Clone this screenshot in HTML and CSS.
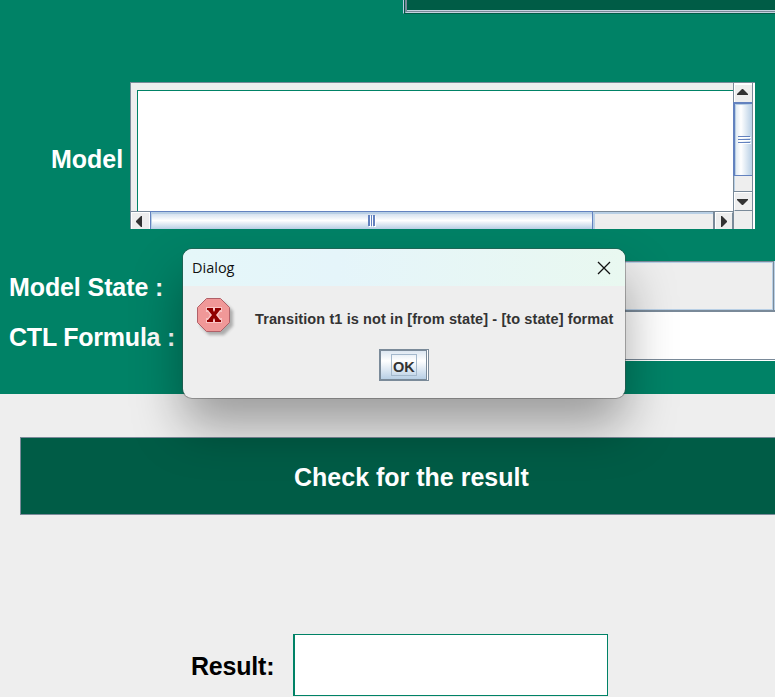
FILE: index.html
```html
<!DOCTYPE html>
<html lang="en">
<head>
<meta charset="utf-8">
<title>Model checker</title>
<link rel="stylesheet" href="styles.css">
</head>
<body>
<main class="inputs">
  <div class="top-button"><div class="top-button-face"></div></div>
  <section class="model-row">
    <label class="label model-label"><span>Model</span></label>
    <div class="scroll-pane">
      <div class="viewport"><div class="textarea"></div></div>
      <div class="vbar">
        <div class="v-btn up"><svg width="11" height="6" viewBox="0 0 11 6"><path d="M5 0h1l5 5v1H0V5z"/></svg></div>
        <div class="v-thumb"><i></i><i></i><i></i></div>
        <div class="v-track"></div>
        <div class="v-btn down"><svg width="11" height="6" viewBox="0 0 11 6"><path d="M0 0h11v1L6 6H5L0 1z"/></svg></div>
      </div>
      <div class="hbar">
        <div class="h-btn left"><svg width="6" height="11" viewBox="0 0 6 11"><path d="M6 0v11H5L0 6V5l5-5z"/></svg></div>
        <div class="h-thumb"><i></i><i></i><i></i></div>
        <div class="h-track"></div>
        <div class="h-btn right"><svg width="6" height="11" viewBox="0 0 6 11"><path d="M0 0v11h1l5-5V5L1 0z"/></svg></div>
      </div>
      <div class="corner"></div>
    </div>
  </section>
  <section class="form-row">
    <label class="label"><span class="t-state">Model State :</span></label>
    <div class="combo"><div class="combo-value"></div><div class="combo-arrow"></div></div>
  </section>
  <section class="form-row formula">
    <label class="label"><span class="t-formula">CTL Formula :</span></label>
    <div class="field"></div>
  </section>
</main>
<div class="check-button"><span class="t-check">Check for the result</span></div>
<section class="result-row">
  <label class="label result-label"><span class="t-result">Result:</span></label>
  <div class="result-field"></div>
</section>

<div class="dialog">
  <header class="titlebar">
    <span class="title">Dialog</span>
    <svg class="close" width="14" height="14" viewBox="0 0 14 14"><path d="M1 1l12 12M13 1L1 13"/></svg>
  </header>
  <div class="message">
    <svg class="error-icon" width="40" height="42" viewBox="0 0 40 42">
      <path class="icon-shadow" d="M13 5h15l9 9v15l-9 9H13l-9-9V14z"/>
      <path class="octagon" d="M10.500 1.500h14l9 9v15l-9 9h-14l-9-9v-15z"/>
      <path class="x-halo" d="M10 10h16v5h-2l-2 3 2 3h2v5H10v-5h2l2-3-2-3h-2z"/>
      <path class="x-mark" d="M12 11h5v2l1 2 1-2v-2h6v2h-1l-4 5 4 5h1v2h-6v-2l-1-2-1 2v2h-6v-2h1l4-5-4-5h-1v-2z"/>
    </svg>
    <span class="message-text">Transition t1 is not in [from state] - [to state] format</span>
  </div>
  <div class="actions"><div class="ok"><div class="ok-face"><span class="ok-focus">OK</span></div></div></div>
</div>
</body>
</html>
```
FILE: styles.css
```css
* { box-sizing: border-box; }
body {
  margin: 0;
  width: 775px;
  height: 697px;
  overflow: hidden;
  position: relative;
  background: #eeeeee;
  font-family: "Liberation Sans", Arial, sans-serif;
  font-weight: bold;
}
svg { display: block; }

.inputs { height: 394px; background: #008266; overflow: hidden; }
.label { font-size: 25px; line-height: 30px; color: #fff; white-space: nowrap; }
.t-state { letter-spacing: -.1px; }
.t-formula { letter-spacing: -.22px; }
.t-result { letter-spacing: -.2px; }

.top-button {
  height: 14px;
  margin-left: 403px;
  border-left: 1px solid #b8cfe5;
  border-bottom: 1px solid #005c46;
  background: #005c46;
  padding: 0 0 0 1px;
}
.top-button-face {
  height: 13px;
  background: #005c46;
  border-left: 1px solid #7a8a99;
  border-bottom: 1px solid #c4d3e0;
  box-shadow: inset 1px -1px #7a8a99, inset 1px -2px #c4d3e0, inset 1px 0 #c4d3e0;
}

.model-row { display: flex; margin-top: 68px; height: 147px; }
.model-label { width: 130px; padding: 62px 0 0 51px; }
.scroll-pane {
  width: 625px;
  height: 147px;
  display: grid;
  grid-template-columns: 602px 20px;
  grid-template-rows: 128px 18px;
  background: #eeeeee;
  border: solid #7a8a99;
  border-width: 1px 0 0 1px;
  box-shadow: inset -2px 0 #fff;
}
.viewport { padding: 7px 0 0 6px; }
.textarea {
  height: 121px;
  width: 596px;
  background: #fff;
  border: solid #008266;
  border-width: 1px 0 0 1px;
}
.vbar {
  display: flex;
  flex-direction: column;
  border-left: 1px solid #7a8a99;
  border-right: 1px solid #7a8a99;
}
.v-btn {
  height: 19px;
  display: flex;
  align-items: center;
  justify-content: center;
  border-left: 1px solid #fff;
  border-top: 2px solid #fff;
  fill: #333;
}
.v-btn.up { padding: 0 2px 3px 0; }
.v-btn.down { border-top-width: 1px; border-bottom: 1px solid #7a8a99; padding-right: 2px; }
.v-thumb {
  height: 74px;
  margin-left: -1px;
  border: solid #6382bf;
  border-width: 2px 0 1px 2px;
  box-shadow: inset 1px 1px #b8cfe5;
  background: linear-gradient(90deg, #dce7f1, #fff 35%, #b8cfe5);
  display: flex;
  flex-direction: column;
  align-items: center;
  justify-content: center;
  gap: 2px;
}
.v-thumb i { width: 12px; height: 1px; background: #6382bf; box-shadow: 1px 1px #fff; }
.v-track {
  height: 16px;
  border-bottom: 1px solid #7a8a99;
  box-shadow: inset 1px 0 #b8cfe5;
}
.hbar { display: flex; border-top: 1px solid #7a8a99; }
.h-btn {
  width: 18px;
  border: solid #fff;
  border-width: 1px 0 0 1px;
  display: flex;
  align-items: center;
  justify-content: center;
  fill: #333;
}
.h-btn.left { width: 19px; border-right: 1px solid #fff; padding-right: 3px; }
.h-btn.right { width: 18px; border-right: 1px solid #7a8a99; padding-right: 1px; }
.h-thumb {
  width: 443px;
  margin-top: -1px;
  border: solid #6382bf;
  border-width: 1px 1px 0 1px;
  box-shadow: inset 1px 2px #b8cfe5;
  background: linear-gradient(#c8d8ea, #fff 50%, #b8cfe5);
  display: flex;
  align-items: center;
  justify-content: center;
  gap: 1px;
}
.h-thumb i { width: 2px; height: 11px; background: #6382bf; box-shadow: 1px 1px #fff; }
.h-thumb i:nth-child(2) { width: 1px; }
.h-track {
  flex: 1;
  border-right: 2px solid #7a8a99;
  box-shadow: inset 2px 2px #b8cfe5;
}
.corner { border-left: 1px solid #7a8a99; border-right: 1px solid #7a8a99; }

.form-row { display: flex; height: 51px; margin-top: 32px; }
.form-row .label { width: 183px; padding: 11px 0 0 9px; }
.form-row.formula { height: 49px; margin-top: 0; }
.form-row.formula .label { padding-top: 10px; }
.combo { flex: 1; display: flex; }
.combo-value {
  width: 591px;
  background: #eeeeee;
  border: 1px solid #7a8a99;
  border-bottom-width: 2px;
  box-shadow: inset 0 0 0 1px #b8cfe5;
}
.combo-arrow { width: 1px; background: #b8cfe5; border-bottom: 2px solid #7a8a99; }
.field { flex: 1; background: #fff; height: 49px; border-bottom: 1px solid #fff; box-shadow: inset 0 -1px #7a8a99; }

.check-button {
  margin: 43px 0 0 20px;
  height: 78px;
  width: 785px;
  padding: 24px 0 0 273px;
  background: #005c46;
  border: 1px solid #7a8a99;
  color: #fff;
  font-size: 25px;
  line-height: 30px;
  white-space: nowrap;
}
.result-row { display: flex; margin-top: 119px; }
.result-label { width: 293px; color: #000; padding: 17px 0 0 191px; }
.result-field {
  width: 315px;
  height: 62px;
  background: #fff;
  border: 1px solid #008266;
  border-left-width: 2px;
}

.dialog {
  position: absolute;
  left: 183px;
  top: 249px;
  width: 442px;
  height: 149px;
  border-radius: 9px;
  background: #eeeeee;
  overflow: hidden;
  box-shadow: 0 0 0 1px rgba(70, 70, 70, .4), 0 28px 50px rgba(0, 0, 0, .35);
}
.titlebar {
  height: 37px;
  display: flex;
  align-items: center;
  justify-content: space-between;
  padding: 0 14px 0 9px;
  background: linear-gradient(90deg, #e5f7f9, #e5f5fa 35%, #e9f8f0);
}
.title { font: 14.500px "Open Sans", "Noto Sans", sans-serif; color: #111; }
.close { stroke: #111; stroke-width: 1.300; fill: none; }
.message { display: flex; height: 60px; padding: 11px 0 0 13px; }
.error-icon { flex: none; }
.icon-shadow { fill: #777; opacity: .55; filter: blur(1.500px); }
.octagon { fill: #f09898; stroke: #b06068; }
.x-halo { fill: #f8c4c4; }
.x-mark { fill: #900000; }
.message-text {
  margin-left: 19px;
  padding-top: 13px;
  font-size: 14.500px;
  letter-spacing: .1px;
  line-height: 18px;
  color: #333;
  white-space: nowrap;
}
.actions { display: flex; padding: 3px 0 0 196px; }
.ok { width: 50px; height: 32px; border: 1px solid #7a8a99; background: #fff; padding-right: 1px; }
.ok-face {
  height: 30px;
  border: 1px solid #7a8a99;
  background: linear-gradient(#dce7f1, #fff 35%, #b8cfe5);
  padding: 3px 0 0 10px;
}
.ok-focus {
  display: block;
  width: 26px;
  height: 22px;
  border: 1px solid #a3b8cc;
  padding-left: 1px;
  font-size: 14.500px;
  line-height: 24px;
  color: #333;
}
```
